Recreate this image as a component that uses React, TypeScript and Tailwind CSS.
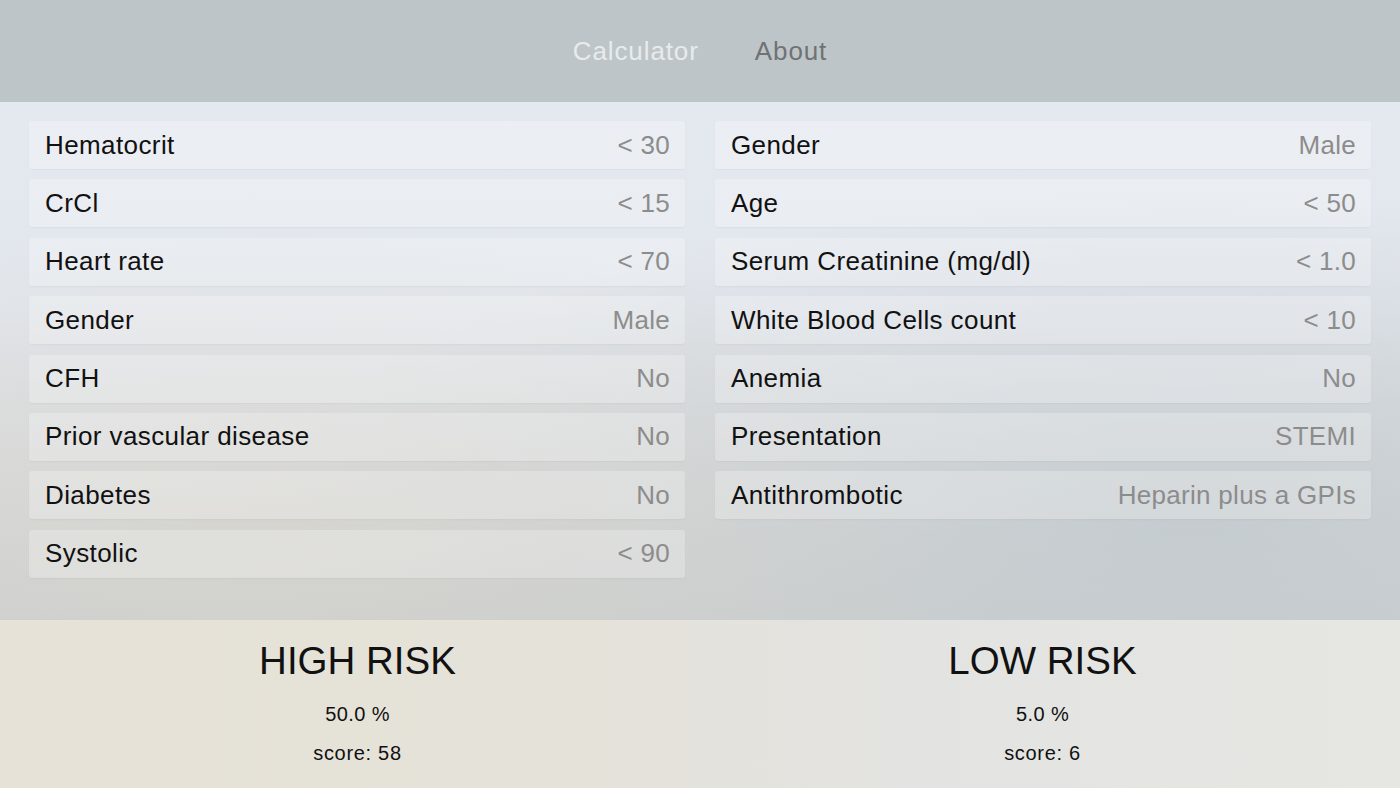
import React from "react";

const left: [string, string][] = [
  ["Hematocrit", "< 30"],
  ["CrCl", "< 15"],
  ["Heart rate", "< 70"],
  ["Gender", "Male"],
  ["CFH", "No"],
  ["Prior vascular disease", "No"],
  ["Diabetes", "No"],
  ["Systolic", "< 90"],
];

const right: [string, string][] = [
  ["Gender", "Male"],
  ["Age", "< 50"],
  ["Serum Creatinine (mg/dl)", "< 1.0"],
  ["White Blood Cells count", "< 10"],
  ["Anemia", "No"],
  ["Presentation", "STEMI"],
  ["Antithrombotic", "Heparin plus a GPIs"],
];

function Row({ label, value }: { label: string; value: string }) {
  return (
    <div className="h-[48px] flex items-center justify-between pl-[16px] pr-[15px] rounded-[3px] bg-white/25 shadow-[0_1px_2px_rgba(0,0,0,0.04)]">
      <span className="text-[26px] tracking-[0.4px] text-[#111111]">{label}</span>
      <span className="text-[26px] tracking-[0.3px] text-[#8c8c8c]">{value}</span>
    </div>
  );
}

function Result({ title, pct, score }: { title: string; pct: string; score: string }) {
  return (
    <div className="flex flex-col items-center pt-[18px]">
      <div className="text-[38.5px] leading-[46px] text-[#111111]">{title}</div>
      <div className="mt-[18px] text-[20px] leading-[24px] tracking-[0.4px] text-[#111111]">{pct}</div>
      <div className="mt-[15px] text-[20px] leading-[24px] tracking-[0.7px] text-[#111111]">{score}</div>
    </div>
  );
}

export default function App() {
  return (
    <div
      className="w-[1400px] h-[788px] overflow-hidden flex flex-col"
      style={{ fontFamily: '"Liberation Sans", Arial, sans-serif' }}
    >
      <header className="h-[102px] shrink-0 bg-[#bec5c8] flex items-center justify-center gap-[56px]">
        <span className="text-[26px] tracking-[0.9px] text-[#e8ebed]">Calculator</span>
        <span className="text-[26px] tracking-[0.9px] text-[#707274]">About</span>
      </header>
      <main className="h-[518px] shrink-0 relative bg-[linear-gradient(180deg,#e4e9f0_0%,#e2e6ec_40%,#d8dbdd_75%,#cdd1d2_100%)]">
        <div className="absolute inset-0 bg-[radial-gradient(ellipse_at_85%_80%,rgba(190,198,203,0.7),transparent_55%)]" />
        <div className="absolute inset-0 bg-[radial-gradient(ellipse_at_20%_85%,rgba(214,210,200,0.6),transparent_50%)]" />
        <div className="relative grid grid-cols-2 gap-x-[30px] px-[29px] pt-[19px]">
          <div className="flex flex-col gap-[10.4px]">
            {left.map(([l, v]) => (
              <Row key={l} label={l} value={v} />
            ))}
          </div>
          <div className="flex flex-col gap-[10.4px]">
            {right.map(([l, v]) => (
              <Row key={l} label={l} value={v} />
            ))}
          </div>
        </div>
      </main>
      <footer className="flex-1 grid grid-cols-2 px-[15px] bg-[linear-gradient(90deg,#e6e2d7_0%,#e5e2d9_40%,#e3e3e1_65%,#e6e6e3_100%)]">
        <Result title="HIGH RISK" pct="50.0 %" score="score: 58" />
        <Result title="LOW RISK" pct="5.0 %" score="score: 6" />
      </footer>
    </div>
  );
}
